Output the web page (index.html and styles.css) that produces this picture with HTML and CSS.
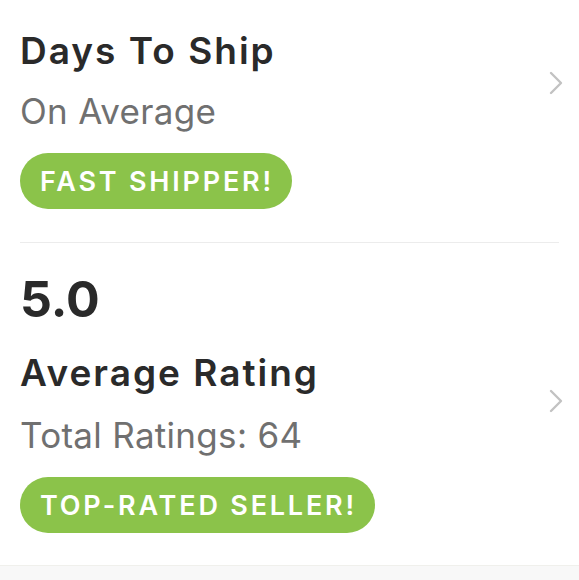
FILE: index.html
```html
<!DOCTYPE html>
<html>
<head>
<meta charset="utf-8">
<link rel="stylesheet" href="styles.css">
</head>
<body>
<div class="list">
  <div class="row row-first">
    <div class="content">
      <div class="title">Days To Ship</div>
      <div class="sub">On Average</div>
      <div class="badge">FAST SHIPPER!</div>
    </div>
    <svg class="chev chev-first" width="14" height="24" viewBox="0 0 14 24"><polyline points="2,2 12,12 2,22" fill="none" stroke="#c2c2c2" stroke-width="2.4" stroke-linecap="round" stroke-linejoin="round"/></svg>
  </div>
  <div class="row row-second">
    <div class="content">
      <div class="big">5.0</div>
      <div class="title title-2">Average Rating</div>
      <div class="sub sub-2">Total Ratings: 64</div>
      <div class="badge">TOP-RATED SELLER!</div>
    </div>
    <svg class="chev" width="14" height="24" viewBox="0 0 14 24"><polyline points="2,2 12,12 2,22" fill="none" stroke="#c2c2c2" stroke-width="2.4" stroke-linecap="round" stroke-linejoin="round"/></svg>
  </div>
</div>
<div class="footer"></div>
</body>
</html>
```
FILE: styles.css
```css
html, body {
  margin: 0;
  padding: 0;
  background: #ffffff;
  font-family: "Inter", "Liberation Sans", sans-serif;
}
.list {
  padding-left: 20px;
}
.row {
  display: flex;
  align-items: center;
  margin-right: 20px;
}
.row-first {
  align-items: flex-start;
  padding-top: 29px;
  padding-bottom: 33px;
  border-bottom: 1px solid #ececec;
}
.row-second {
  padding-top: 26px;
  padding-bottom: 32px;
}
.content {
  flex: 1;
  display: flex;
  flex-direction: column;
  align-items: flex-start;
}
.title {
  font-size: 37px;
  line-height: 44px;
  font-weight: 600;
  letter-spacing: 2px;
  color: #2a2a2a;
}
.title-2 {
  margin-top: 22px;
}
.sub {
  font-size: 35px;
  line-height: 44px;
  letter-spacing: 0.3px;
  color: #707070;
  margin-top: 16px;
}
.sub-2 {
  margin-top: 18px;
}
.big {
  font-size: 50px;
  line-height: 60px;
  font-weight: 700;
  color: #2a2a2a;
}
.badge {
  margin-top: 20px;
  height: 56px;
  box-sizing: border-box;
  padding: 0 18px 0 20px;
  border-radius: 28px;
  background: #8bc34a;
  color: #ffffff;
  font-size: 27px;
  font-weight: 600;
  letter-spacing: 2.8px;
  display: flex;
  align-items: center;
}
.chev {
  flex: none;
  margin-right: -4px;
}
.chev-first {
  margin-top: 42px;
}
.footer {
  height: 20px;
  background: #f8f8f8;
  border-top: 1px solid #f0f0ec;
}
```
